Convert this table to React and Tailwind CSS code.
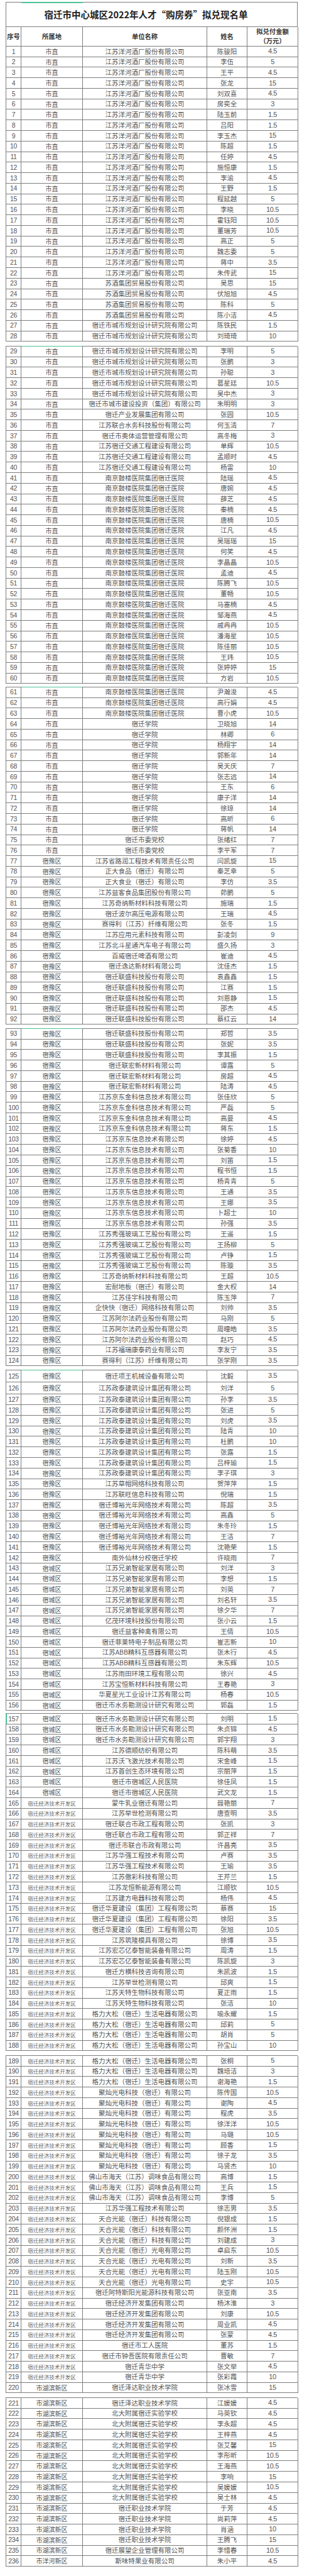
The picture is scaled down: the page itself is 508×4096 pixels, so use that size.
const R = { A: '市直', B: '宿豫区', C: '宿城区', D: '宿迁经济技术开发区', E: '市湖滨新区', F: '市洋河新区' }

const groups = [
  ['A', '江苏洋河酒厂股份有限公司', '陈骏阳:4.5 李伍:5 王平:4.5 张龙:15 刘双喜:4.5 房奕全:3 陆玉前:1.5 吕阳:1.5 李玉杰:15 陈超:1.5 任婷:4.5 施恒康:1.5 李渝:4.5 王野:1.5 程延越:5 李晓:10.5 霍钰阳:10.5 董瑞芳:10.5 高正:5 魏志委:5 蒋中:3.5 朱传武:15'],
  ['A', '苏酒集团贸易股份有限公司', '吴思:15 伏旭旭:4.5 陈科:5 陈小洁:4.5'],
  ['A', '宿迁市城市规划设计研究院有限公司', '陈铁民:1.5 刘琦琦:10 李明:5 张鹏:3 孙聪:3 葛星廷:10.5 吴中杰:3'],
  ['A', '宿迁市城市建设投资（集团）有限公司', '朱明明:3'],
  ['A', '宿迁产业发展集团有限公司', '张园:10.5'],
  ['A', '江苏联合水务科技股份有限公司', '何玉清:7'],
  ['A', '宿迁市奥体运营管理有限公司', '高冬梅:3'],
  ['A', '江苏宿迁交通工程建设有限公司', '单辉:10.5 孟顺时:4.5 杨雷:10'],
  ['A', '南京鼓楼医院集团宿迁医院', '陆瑶:4.5 唐婉:4.5 薛芝:4.5 秦楠:4.5 唐楠:10.5 江凡:4.5 吴瑶瑶:15 何笑:4.5 李晶晶:10.5 孟迪:4.5 陈腾飞:10.5 董畅:10.5 马塞楠:4.5 邹海燕:4.5 戚冉冉:10.5 潘海星:10.5 陈佳丽:10.5 王玮:10.5 张婷婷:15 方岩:10.5 尹瀚浚:4.5 高行娟:4.5 曹小虎:10.5'],
  ['A', '宿迁学院', '卫晓旭:14 林卿:6 杨翔宇:14 郭新年:14 吴天庆:7 张志远:14 王东:6 康子洋:14 徐琼:14 高昕:6 蒋帆:14'],
  ['A', '宿迁市委党校', '张绪红:7 李平军:7'],
  ['B', '江苏省路润工程技术有限责任公司', '闫凯旋:15'],
  ['B', '正大食品（宿迁）有限公司', '秦芝幸:5'],
  ['B', '正大食业（宿迁）有限公司', '李仿:3.5'],
  ['B', '江苏益客食品集团股份有限公司', '茆鹏:5'],
  ['B', '江苏奇纳新材料科技有限公司', '施瑞:1.5'],
  ['B', '宿迁波尔高压电源有限公司', '王瑞:4.5'],
  ['B', '赛得利（江苏）纤维有限公司', '张冬:1.5'],
  ['B', '江苏应用元素科技有限公司', '彭凌剑:9'],
  ['B', '江苏北斗星通汽车电子有限公司', '盛久扬:3'],
  ['B', '百威宿迁啤酒有限公司', '崔迪:4.5'],
  ['B', '宿迁逸达新材料有限公司', '沈佳杰:1.5'],
  ['B', '宿迁联盛科技股份有限公司', '袁鑫鑫:1.5 江赛:1.5 刘恩静:1.5 邵杰:4.5 蔡红云:14 郑哲:3.5 张妮:3.5 李其振:1.5'],
  ['B', '宿迁联宏新材料有限公司', '谭露:5 房超:4.5 陆涛:4.5'],
  ['B', '江苏京东金科信息技术有限公司', '张佳欣:5 严磊:5 高曼:4.5 蒋东:1.5'],
  ['B', '江苏京东信息技术有限公司', '徐婷:4.5 张菊香:10 刘笛:1.5 程书恒:1.5 杨青青:5 王通:3.5 王娜:3.5 卜超士:10 孙强:3.5'],
  ['B', '江苏秀强玻璃工艺股份有限公司', '王遥:1.5 王扬柳:5 卢铮:1.5 陈璇:3.5'],
  ['B', '江苏奇纳新材料科技有限公司', '王超:10.5'],
  ['B', '宏耐地板（宿迁）有限公司', '金大权:14'],
  ['B', '江苏佳宇科技有限公司', '陈玉萍:7'],
  ['B', '企快快（宿迁）网络科技有限公司', '刘帅:3.5'],
  ['B', '江苏阿尔法药业股份有限公司', '马刚:5 周曈皓:3.5 赵巧:4.5'],
  ['B', '江苏福瑞康泰药业有限公司', '李友宁:3.5'],
  ['B', '赛得利（江苏）纤维有限公司', '张学刚:3.5'],
  ['B', '宿迁项王机械设备有限公司', '沈毅:3.5'],
  ['B', '江苏政泰建筑设计集团有限公司', '刘洋:5 孙李:3.5 张进:5 刘虎:3.5 陆青:10 杜鹏:10 张露:1.5 吕梓瑜:1.5 李子琪:3'],
  ['B', '江苏草帽网络科技有限公司', '贺萍萍:1.5'],
  ['B', '江苏联旺信息科技有限公司', '倪瑞:1.5'],
  ['B', '宿迁博裕光年网络技术有限公司', '陈超:3.5 高鑫:5 朱冬玲:1.5 王洁:7 沈艳荣:1.5'],
  ['B', '南外仙林分校宿迁学校', '许晓雨:7'],
  ['C', '江苏兄弟智能家居有限公司', '刘洋:3 李想:1.5 刘英:7 刘名轩:3.5 徐夕华:7'],
  ['C', '亿茂环境科技股份有限公司', '张小云:1.5'],
  ['C', '宿迁益客种禽有限公司', '王倩:10.5'],
  ['C', '宿迁菲莱特电子制品有限公司', '崔志新:10'],
  ['C', '江苏ABB精科互感器有限公司', '张木行:4.5 朱东辉:10.5'],
  ['C', '江苏雨田环境工程有限公司', '徐兴:4.5'],
  ['C', '江苏宝恒新材料科技有限公司', '王春艳:3'],
  ['C', '华夏星光工业设计江苏有限公司', '杨春:10.5'],
  ['C', '宿迁市水务勘测设计研究有限公司', '郭磊:1.5 刘明:1.5 朱贞锦:4.5 郭宇翔:3'],
  ['C', '江苏德顺纺织有限公司', '陈科萌:3.5'],
  ['C', '江苏沃飞激光技术有限公司', '宋金峰:1.5'],
  ['C', '江苏首创生态环境有限公司', '宗丽萍:1.5'],
  ['C', '宿迁市宿城区人民医院', '徐佳凤:1.5 武文龙:1.5'],
  ['D', '蒙牛乳业宿迁有限公司', '聂艳丽:7'],
  ['D', '江苏举世检测有限公司', '唐查明:3.5'],
  ['D', '宿迁联合市政工程有限公司', '张凯:3 郭正祥:7'],
  ['D', '宿迁市联合市政有限公司', '许昌亮:3.5'],
  ['D', '江苏华强工程技术有限公司', '卢赛:3.5 王瑜:3.5'],
  ['D', '江苏傲彩科技有限公司', '王芹兰:1.5'],
  ['D', '江苏龙恒新能源有限公司', '江顺钦:10.5'],
  ['D', '江苏建方电器科技有限公司', '杨伟:4.5'],
  ['D', '宿迁华夏建设（集团）工程有限公司', '蔡赛:15 徐阳:3.5 张旭:10.5'],
  ['D', '江苏筑隆模具有限公司', '徐博:3.5'],
  ['D', '江苏宏芯亿泰智能装备有限公司', '周涛:1.5 陈凯旋:3'],
  ['D', '宿迁方横科技咨询有限公司', '朱凯波:1.5'],
  ['D', '江苏举世检测有限公司', '邱爽:1.5'],
  ['D', '江苏天特生物科技有限公司', '夏正雨:1.5 张洁:10'],
  ['D', '格力大松（宿迁）生活电器有限公司', '喻永耀:1.5 邱莉:5 胡肖:5 孙宝山:10 张桐:5 魏培洁:3 谢海艳:1.5'],
  ['D', '聚灿光电科技（宿迁）有限公司', '陈传国:10.5 谢陶:4.5 程虎:3.5 徐洋洋:10.5 马璐:10.5 顾香:1.5 徐子龙:3.5 马贤杰:10'],
  ['D', '佛山市海天（江苏）调味食品有限公司', '高博:1.5 王兵:1.5 李博:5'],
  ['D', '江苏华强工程技术有限公司', '徐志男:3.5'],
  ['D', '天合光能（宿迁）科技有限公司', '倪银成:1.5 颜怀洲:1.5 刘建成:3'],
  ['D', '天合光能（宿迁）光电有限公司', '卓启东:10.5 刘新:3.5 陆玉刚:10.5 史宇:10.5'],
  ['D', '宿迁阿特斯阳光能源科技有限公司', '张亚南:3.5'],
  ['D', '宿迁经济开发集团有限公司', '杨沐淮:3 刘康:10.5 周业凯:4.5 张蒙:4.5'],
  ['D', '宿迁市工人医院', '董苏:1.5'],
  ['D', '宿迁市钟吾医院有限责任公司', '曹敏:7'],
  ['D', '宿迁青华中学', '张文举:4.5 张彩霞:10'],
  ['E', '宿迁泽达职业技术学院', '张冰雪:15 江媛媛:4.5'],
  ['E', '北大附属宿迁实验学校', '马英钦:4.5 李永超:4.5 王梓燕:4.5 张艾馨:15 李彤昕:10.5 王海燕:10.5 李响:15 吴媛媛:10.5 吴士林:4.5'],
  ['E', '宿迁职业技术学院', '于芳:4.5 尚莉萍:4.5 肖涵:10 王腾飞:15'],
  ['E', '宿迁展望企业管理有限公司', '李惜春:10.5'],
  ['F', '斯味特果业有限公司', '朱小平:4.5'],
]

const rows = groups.flatMap(([r, company, list]) =>
  list.split(' ').map((p) => {
    const [name, amount] = p.split(':')
    return { region: r, company, name, amount }
  })
)

// page breaks of the scanned sheet
const pages = [[0, 28], [28, 60], [60, 92], [92, 124], [124, 156], [156, 188], [188, 220], [220, 236]]
const gaps = ['', 'mt-[6.5px]', 'mt-[4.5px]', 'mt-[5.5px]', 'mt-[5.5px]', 'mt-[3.5px]', 'mt-[6.5px]', 'mt-[6.5px]']
const greenTop = [28, 60, 92, 124]

const cjk = "font-['Noto_Sans_CJK_SC',sans-serif]"
const num = "font-['Liberation_Sans','Noto_Sans_CJK_SC',sans-serif] tracking-[-0.4px]"
const cell = 'flex items-center justify-center border-r border-b border-[#7d7d7d] leading-none whitespace-nowrap'

function Row({ row, i }) {
  const tall = i === 124 || i === 125
  return (
    <div className={`grid grid-cols-[24px_98px_198px_64px_81px] ${tall ? 'h-[19.3px]' : 'h-[16.78px]'} text-[#555]`}>
      <div className={`${cell} ${num} text-[10.5px] relative`}>
        {i === 156 && <span className="absolute left-[-1px] top-0 bottom-0 w-[2px] bg-[#4cc394]" />}
        {i + 1}
      </div>
      <div className={`${cell} ${cjk} relative ${row.region === 'D' ? 'text-[8.5px] text-[#666]' : 'text-[10px]'}`}>
        {greenTop.includes(i) && <span className="absolute left-0 right-0 top-[-1px] h-[1px] bg-[#4cc394]" />}
        {R[row.region]}
      </div>
      <div className={`${cell} ${cjk} text-[10.5px]`}>{row.company}</div>
      <div className={`${cell} ${cjk} text-[10.5px]`}>{row.name}</div>
      <div className={`${cell} ${num} text-[11px]`}>{row.amount}</div>
    </div>
  )
}

export default function App() {
  return (
    <div className="bg-white w-[508px] min-h-[4096px] pt-[3px]">
      <div className="ml-[9px] w-[465px]">
        {pages.map(([a, b], p) => (
          <div key={p} className={`border-l border-[#7d7d7d] ${p > 0 ? 'border-t' : ''} ${gaps[p]}`}>
            {p === 0 && (
              <>
                <div className="relative h-[39.5px] border-t border-r border-b border-[#7d7d7d] flex items-center justify-center pr-[18px]">
                  <span className="absolute left-[24px] top-[-1px] w-[98px] h-[2px] bg-[#4cc394]" />
                  <h1 className={`${cjk} text-[14.5px] font-bold text-[#222] leading-none`}>
                    宿迁市中心城区2022年人才“购房券”拟兑现名单
                  </h1>
                </div>
                <div className={`grid grid-cols-[24px_98px_198px_64px_81px] h-[31.4px] ${cjk} font-bold text-[#333] text-[10.3px]`}>
                  <div className={cell}>序号</div>
                  <div className={cell}>所属地</div>
                  <div className={cell}>单位名称</div>
                  <div className={cell}>姓名</div>
                  <div className={`${cell} flex-col gap-[4px]`}>
                    <span>拟兑付金额</span>
                    <span>（万元）</span>
                  </div>
                </div>
              </>
            )}
            {rows.slice(a, b).map((row, k) => (
              <Row key={a + k} row={row} i={a + k} />
            ))}
          </div>
        ))}
      </div>
    </div>
  )
}
